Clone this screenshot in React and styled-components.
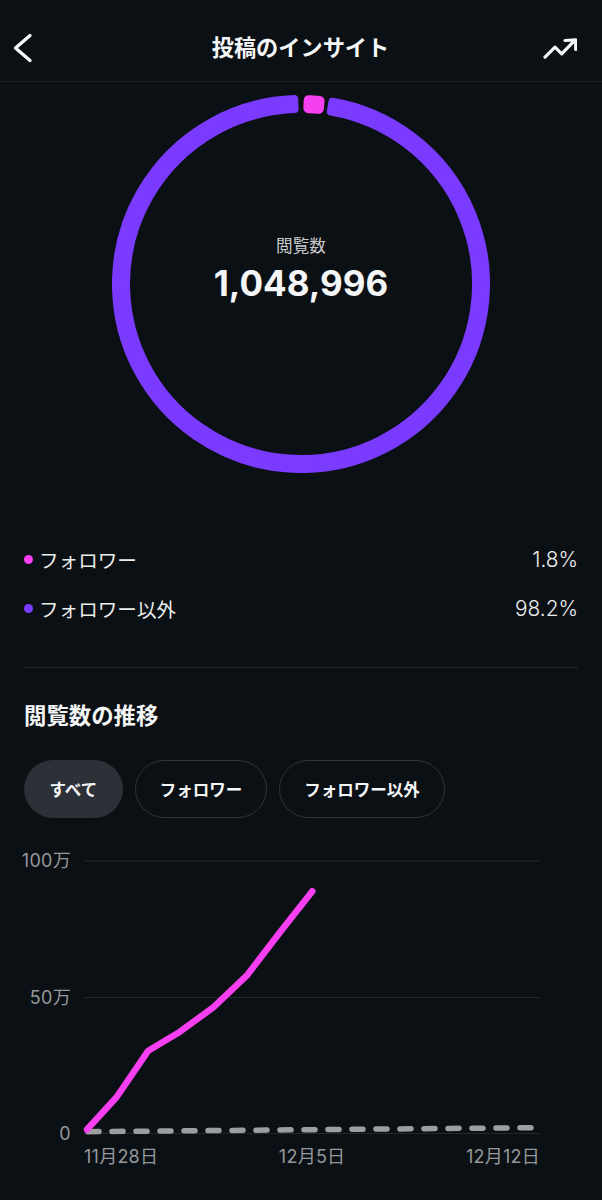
import React from "react";
import styled, { createGlobalStyle } from "styled-components";

const FONT = `Inter, "Noto Sans CJK JP", sans-serif`;

const Global = createGlobalStyle`
  html, body { margin: 0; padding: 0; background: #0b1014; }
  * { box-sizing: border-box; }
`;

const Page = styled.div`
  width: 602px;
  height: 1200px;
  overflow: hidden;
  background: #0b1014;
  color: #f5f6f7;
  font-family: ${FONT};
  display: flex;
  flex-direction: column;
`;

const Header = styled.header`
  height: 82px;
  flex: none;
  padding: 14px 25px 0 24px;
  display: grid;
  grid-template-columns: 1fr auto 1fr;
  align-items: center;
  border-bottom: 1px solid #1a1f23;
`;

const BackIcon = styled.svg`
  display: block;
  margin-left: -11px;
  fill: none;
  stroke: #f5f6f7;
  stroke-width: 3.4;
  stroke-linecap: round;
  stroke-linejoin: round;
`;

const TrendIcon = styled.svg`
  display: block;
  justify-self: end;
  fill: none;
  stroke: #f5f6f7;
  stroke-width: 3.2;
  stroke-linecap: round;
  stroke-linejoin: round;
`;

const Title = styled.h1`
  margin: 0;
  font-size: 22.2px;
  line-height: 30px;
  font-weight: 700;
`;

const RingWrap = styled.section`
  position: relative;
  width: 378px;
  height: 378px;
  margin: 13px 0 0 112px;
  flex: none;
`;

const RingCenter = styled.div`
  position: absolute;
  inset: 0;
  padding-bottom: 29px;
  display: flex;
  flex-direction: column;
  align-items: center;
  justify-content: center;
`;

const RingLabel = styled.div`
  font-size: 16.6px;
  line-height: 22px;
  color: #c9cbcd;
`;

const RingValue = styled.div`
  font-size: 35px;
  line-height: 44px;
  font-weight: 700;
  margin-top: 4px;
`;

const Legend = styled.ul`
  list-style: none;
  margin: 72px 24px 0;
  padding: 0;
  display: flex;
  flex-direction: column;
  gap: 21px;
`;

const LegendRow = styled.li`
  height: 28px;
  display: flex;
  align-items: center;
  font-size: 19.6px;
  color: #eceded;
`;

const Dot = styled.span`
  width: 9px;
  height: 9px;
  border-radius: 50%;
  background: ${(p) => p.$color};
  margin-right: 6px;
`;

const Percent = styled.span`
  margin-left: auto;
  font-size: 20.8px;
  font-weight: 300;
`;

const Divider = styled.hr`
  margin: 45px 24px 0;
  border: 0;
  border-top: 1px solid #24282c;
`;

const Heading = styled.h2`
  margin: 33px 24px 0;
  font-size: 22.4px;
  line-height: 30px;
  font-weight: 700;
`;

const Chips = styled.div`
  margin: 29px 24px 0;
  display: flex;
  gap: 12px;
`;

const Chip = styled.div`
  height: 58px;
  padding: 0 ${(p) => (p.$active ? "25.5px" : "24px")};
  border-radius: 29px;
  display: flex;
  align-items: center;
  font-size: 16.5px;
  font-weight: 700;
  background: ${(p) => (p.$active ? "#2c3137" : "transparent")};
  border: ${(p) => (p.$active ? "0" : "1px solid #30353a")};
`;

const Chart = styled.section`
  margin-top: 33px;
  display: grid;
  grid-template-columns: 84px 480px;
  grid-template-rows: 293px 30px;
`;

const YAxis = styled.div`
  padding-right: 13px;
  display: flex;
  flex-direction: column;
  justify-content: space-between;
  align-items: flex-end;
  font-size: 18px;
  line-height: 20px;
  letter-spacing: 0.3px;
  color: #94989c;
`;

const Plot = styled.svg`
  display: block;
  overflow: visible;
`;

const XAxis = styled.div`
  grid-column: 2;
  width: 456px;
  padding-top: 2px;
  display: flex;
  justify-content: space-between;
  font-size: 18px;
  line-height: 22px;
  letter-spacing: 0.25px;
  color: #94989c;
`;

function sector(a0, a1, rOut, rIn, cx = 189, cy = 189) {
  const pt = (r, a) => {
    const t = (a * Math.PI) / 180;
    return `${(cx + r * Math.sin(t)).toFixed(2)} ${(cy - r * Math.cos(t)).toFixed(2)}`;
  };
  const large = a1 - a0 > 180 ? 1 : 0;
  return `M${pt(rOut, a0)}A${rOut} ${rOut} 0 ${large} 1 ${pt(rOut, a1)}L${pt(rIn, a1)}A${rIn} ${rIn} 0 ${large} 0 ${pt(rIn, a0)}Z`;
}

const series = [
  [3, 278.5], [32.7, 246], [64.3, 199.700], [96, 180.700], [129.3, 156.300], [162.7, 124.700], [196, 81.300], [228.3, 40.300],
];

export default function App() {
  return (
    <Page>
      <Global />
      <Header>
        <BackIcon width="20" height="30" viewBox="0 0 20 30">
          <path d="M17 2.500 2.500 15 17 27.500" />
        </BackIcon>
        <Title>投稿のインサイト</Title>
        <TrendIcon width="34" height="22" viewBox="0 0 34 22">
          <path d="M2 20.200 12 10.200l6.700 6.600L31 4.200" />
          <path d="M22 3.500l10.700-.700V12.500" />
        </TrendIcon>
      </Header>

      <RingWrap>
        <svg width="378" height="378" viewBox="0 0 378 378">
          <path d={sector(9.8, 357.900, 185, 175)} fill="#7a3bff" stroke="#7a3bff" strokeWidth="8" strokeLinejoin="round" />
          <path d={sector(2.4, 5.8, 184, 176)} fill="#f63ff0" stroke="#f63ff0" strokeWidth="10" strokeLinejoin="round" />
        </svg>
        <RingCenter>
          <RingLabel>閲覧数</RingLabel>
          <RingValue>1,048,996</RingValue>
        </RingCenter>
      </RingWrap>

      <Legend>
        <LegendRow>
          <Dot $color="#f63ff0" />
          フォロワー
          <Percent>1.8%</Percent>
        </LegendRow>
        <LegendRow>
          <Dot $color="#7a3bff" />
          フォロワー以外
          <Percent>98.2%</Percent>
        </LegendRow>
      </Legend>

      <Divider />
      <Heading>閲覧数の推移</Heading>

      <Chips>
        <Chip $active>すべて</Chip>
        <Chip>フォロワー</Chip>
        <Chip>フォロワー以外</Chip>
      </Chips>

      <Chart>
        <YAxis>
          <span>100万</span>
          <span>50万</span>
          <span>0</span>
        </YAxis>
        <Plot width="480" height="293" viewBox="0 0 480 293">
          <g stroke="#24282c" strokeWidth="1.200">
            <line x1="0" x2="456" y1="10" y2="10" />
            <line x1="0" x2="456" y1="146.500" y2="146.500" />
            <line x1="0" x2="456" y1="282.500" y2="282.500" />
          </g>
          <path d="M2 280.700 L447 276.700" fill="none" stroke="#9c9e9f" strokeWidth="5.500" strokeLinecap="round" strokeDasharray="11 13" strokeDashoffset="-2" />
          <polyline
            points={series.map(([x, y]) => `${x},${y}`).join(" ")}
            fill="none"
            stroke="#f63ff0"
            strokeWidth="6.500"
            strokeLinecap="round"
            strokeLinejoin="round"
          />
        </Plot>
        <XAxis>
          <span>11月28日</span>
          <span>12月5日</span>
          <span>12月12日</span>
        </XAxis>
      </Chart>
    </Page>
  );
}
